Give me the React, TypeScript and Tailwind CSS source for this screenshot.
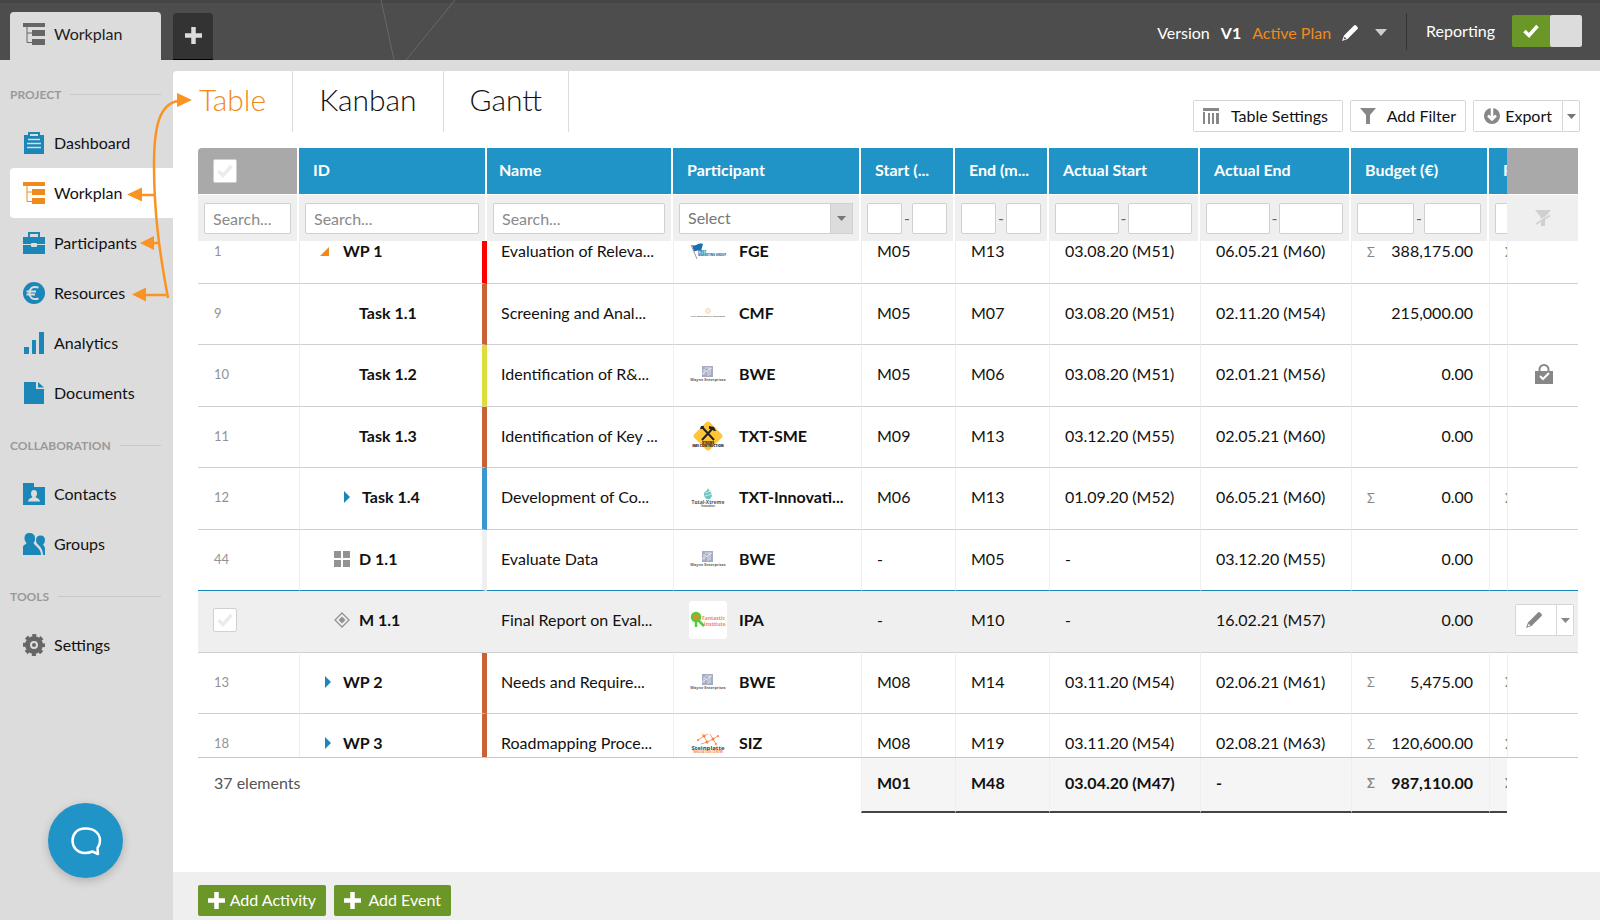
import { useState, type ReactNode } from 'react'

type Row = {
  nr: string
  id: string
  kind: 'open' | 'closed' | 'child' | 'closedChild' | 'deliverable' | 'milestone'
  bar: string
  name: string
  participant: string
  logo: string
  start: string
  end: string
  actualStart: string
  actualEnd: string
  budget: string
  sum?: boolean
  locked?: boolean
}

const rows: Row[] = [
  { nr: '1', id: 'WP 1', kind: 'open', bar: 'border-r-[#ff0000]', name: 'Evaluation of Releva...', participant: 'FGE', logo: 'fge', start: 'M05', end: 'M13', actualStart: '03.08.20 (M51)', actualEnd: '06.05.21 (M60)', budget: '388,175.00', sum: true },
  { nr: '9', id: 'Task 1.1', kind: 'child', bar: 'border-r-[#c96137]', name: 'Screening and Anal...', participant: 'CMF', logo: 'cmf', start: 'M05', end: 'M07', actualStart: '03.08.20 (M51)', actualEnd: '02.11.20 (M54)', budget: '215,000.00' },
  { nr: '10', id: 'Task 1.2', kind: 'child', bar: 'border-r-[#dddd3c]', name: 'Identification of R&...', participant: 'BWE', logo: 'bwe', start: 'M05', end: 'M06', actualStart: '03.08.20 (M51)', actualEnd: '02.01.21 (M56)', budget: '0.00', locked: true },
  { nr: '11', id: 'Task 1.3', kind: 'child', bar: 'border-r-[#c96137]', name: 'Identification of Key ...', participant: 'TXT-SME', logo: 'sme', start: 'M09', end: 'M13', actualStart: '03.12.20 (M55)', actualEnd: '02.05.21 (M60)', budget: '0.00' },
  { nr: '12', id: 'Task 1.4', kind: 'closedChild', bar: 'border-r-[#3b97cf]', name: 'Development of Co...', participant: 'TXT-Innovati...', logo: 'txi', start: 'M06', end: 'M13', actualStart: '01.09.20 (M52)', actualEnd: '06.05.21 (M60)', budget: '0.00', sum: true },
  { nr: '44', id: 'D 1.1', kind: 'deliverable', bar: 'border-r-[#efefef]', name: 'Evaluate Data', participant: 'BWE', logo: 'bwe', start: '-', end: 'M05', actualStart: '-', actualEnd: '03.12.20 (M55)', budget: '0.00' },
  { nr: '45', id: 'M 1.1', kind: 'milestone', bar: 'border-r-[#efefef]', name: 'Final Report on Eval...', participant: 'IPA', logo: 'ipa', start: '-', end: 'M10', actualStart: '-', actualEnd: '16.02.21 (M57)', budget: '0.00' },
  { nr: '13', id: 'WP 2', kind: 'closed', bar: 'border-r-[#c96137]', name: 'Needs and Require...', participant: 'BWE', logo: 'bwe', start: 'M08', end: 'M14', actualStart: '03.11.20 (M54)', actualEnd: '02.06.21 (M61)', budget: '5,475.00', sum: true },
  { nr: '18', id: 'WP 3', kind: 'closed', bar: 'border-r-[#c96137]', name: 'Roadmapping Proce...', participant: 'SIZ', logo: 'siz', start: 'M08', end: 'M19', actualStart: '03.11.20 (M54)', actualEnd: '02.08.21 (M63)', budget: '120,600.00', sum: true },
]

const navGroups = [
  { title: 'Project', items: ['Dashboard', 'Workplan', 'Participants', 'Resources', 'Analytics', 'Documents'] },
  { title: 'Collaboration', items: ['Contacts', 'Groups'] },
  { title: 'Tools', items: ['Settings'] },
]

function WorkplanIcon() {
  return (
    <svg className="size-[22px]" viewBox="0 0 22 22" fill="currentColor" aria-hidden="true">
      <path d="M0 0h22v4H0zM9 7h13v6H9zM9 16h13v6H9z" />
      <path d="M4 4v15.500h5M4 10h5" fill="none" stroke="currentColor" />
    </svg>
  )
}

function NavIcon({ name }: { name: string }) {
  if (name === 'Workplan') return <WorkplanIcon />
  return (
    <svg className="size-[22px]" viewBox="0 0 22 22" fill="currentColor" aria-hidden="true">
      {name === 'Dashboard' && (
        <>
          <path fillRule="evenodd" d="M5 3V0h12v3h4v19H1V3zM7 2v2h8V2z" />
          <path d="M5 7.500h12M4 11.500h14M4 15.500h14" stroke="#dcdcdc" strokeWidth="1.500" />
        </>
      )}
      {name === 'Participants' && (
        <>
          <path fillRule="evenodd" d="M5 5V0h12v5h5v17H0V5zM7 2v3h8V2z" />
          <path d="M0 12.500h8M14 12.500h8" stroke="#dcdcdc" />
          <rect x="8" y="11" width="6" height="4" rx="1" fill="#dcdcdc" />
        </>
      )}
      {name === 'Resources' && (
        <>
          <circle cx="11" cy="11" r="11" />
          <path d="M15.500 5.500C9 3.500 6.500 7 6.500 11s2.500 7.500 9 5.500M3.500 9.500H13M3.500 12.500H12" fill="none" stroke="#dcdcdc" strokeWidth="2" />
        </>
      )}
      {name === 'Analytics' && <path d="M1 15h5v7H1zM9 8h4v14H9zM16 0h5v22h-5z" />}
      {name === 'Documents' && <path d="M1 0h12v7h8v15H1zM15 0l6 5.500h-6z" />}
      {name === 'Contacts' && (
        <>
          <path d="M0 0h11v4h11v18H0z" />
          <path d="M11 7c-2 0-3 1.500-3 3.500 0 1.500.5 2.500 1.500 3.500-.5 1-4.500 1.500-4.500 4.500h12c0-3-4-3.500-4.500-4.500 1-1 1.500-2 1.500-3.500C14 8.500 13 7 11 7z" fill="#dcdcdc" />
        </>
      )}
      {name === 'Groups' && (
        <>
          <path d="M6 0C3 0 1.500 2 1.500 5c0 2 .5 3.500 2 5C3 11.500 0 12 0 14v8h18c0-7-6-8.500-7.500-12 1.500-1.500 1.500-3 1.500-5 0-3-2-5-6-5z" />
          <path d="M17.500 2.500c-3 0-4.500 2-4.500 4.500 0 1.500.5 3 1.500 4 2 2 5.500 5 5.500 11h2v-6c0-2-1-3-2-4.500 1-1 2-2.500 2-4.500 0-2.500-1.500-4.500-4.500-4.500z" />
        </>
      )}
      {name === 'Settings' && (
        <>
          <circle cx="11" cy="11" r="6.500" fill="none" stroke="currentColor" strokeWidth="5" />
          <circle cx="11" cy="11" r="9.500" fill="none" stroke="currentColor" strokeWidth="3" strokeDasharray="4 3.460" strokeDashoffset="2" />
          <circle cx="11" cy="11" r="2" />
        </>
      )}
    </svg>
  )
}

function Plus() {
  return (
    <svg className="size-[17px]" viewBox="0 0 17 17" aria-hidden="true">
      <path d="M8.500 0v17M0 8.500h17" stroke="currentColor" strokeWidth="4.500" />
    </svg>
  )
}

function Caret() {
  return (
    <svg className="h-[5px] w-[9px]" viewBox="0 0 9 5" fill="currentColor" aria-hidden="true">
      <path d="M0 0h9L4.500 5z" />
    </svg>
  )
}

function Check() {
  return (
    <svg className="size-4" viewBox="0 0 16 16" fill="none" stroke="currentColor" strokeWidth="3.500" aria-hidden="true">
      <path d="M1.500 8l4.500 4.500L14.500 3" />
    </svg>
  )
}

function Pencil() {
  return (
    <svg className="size-4" viewBox="0 0 16 16" fill="currentColor" aria-hidden="true">
      <path fillRule="evenodd" d="M12.500 0c1.500 0 3.500 2 3.500 3.500L5.500 14 0 16l2-5.500zM2.700 11.800l-1.100 2.600 2.800-1z" />
    </svg>
  )
}

function Tick({ label }: { label: string }) {
  return (
    <label className="relative flex size-6 items-center justify-center rounded-xs border border-[#d0d0d0] bg-white text-[#ebebeb]">
      <input type="checkbox" aria-label={label} className="absolute inset-0 appearance-none" />
      <Check />
    </label>
  )
}

// Participant logos, all on a 38px white tile
function Logo({ name }: { name: string }) {
  return (
    <svg className="size-[38px] shrink-0 rounded-sm bg-white" viewBox="0 0 38 38" fontFamily="Open Sans, sans-serif" aria-hidden="true">
      {name === 'fge' && (
        <>
          <path d="M2 13l6 14" stroke="#999" strokeWidth="1" />
          <path d="M3 13c4 2 6-3 11-1l-2 7c-3-2-5 1-7 0z" fill="#1c6fae" />
          <text x="9" y="21" fontSize="3" fontWeight="800" fill="#1c6fae">FIRST</text>
          <text x="9" y="24" fontSize="2.800" fontWeight="800" fill="#1c6fae">MARKETING GROUP</text>
        </>
      )}
      {name === 'cmf' && (
        <>
          <circle cx="19" cy="17" r="2.500" fill="#fbeedd" stroke="#f3dcc0" />
          <text x="19" y="23" fontSize="2.300" textAnchor="middle" fontWeight="600" fill="#555">Cray Manufacturer Foundation</text>
        </>
      )}
      {name === 'bwe' && (
        <>
          <rect x="13" y="11" width="11" height="11" fill="#a5abc0" />
          <path d="M15 20v-6l3 3 3-4v7M16 13h6M19 21v-4M13 19l10-6" stroke="#dfe2ea" fill="none" />
          <text x="19" y="26" fontSize="3.800" textAnchor="middle" fontWeight="700" fill="#5a6072">Wayne Enterprises</text>
        </>
      )}
      {name === 'sme' && (
        <>
          <rect x="8" y="8" width="22" height="22" rx="3" transform="rotate(45 19 19)" fill="#fdc537" />
          <path d="M13 10l12 13M24 11L13 23" stroke="#222" strokeWidth="2" />
          <path d="M12 9l3 0-1 3-3 0zM20 9l5 1 2 4-2 0-2-2-3 0z" fill="#222" />
          <text x="19" y="26.500" fontSize="3" textAnchor="middle" fontWeight="800" fill="#222">XTREME</text>
          <text x="19" y="29.500" fontSize="3.200" textAnchor="middle" fontWeight="800" fill="#222">SME CONTRUCTION</text>
        </>
      )}
      {name === 'txi' && (
        <>
          <path d="M15 16c0-3 3-2 4-6 1 3 3 3 4 8l-2 3c-3 1-6-1-6-5z" fill="#6cc5c1" />
          <path d="M16 15l6-2M16 18l7-2" stroke="#c5ebe7" />
          <text x="19" y="26" fontSize="5" textAnchor="middle" fontWeight="700" fill="#555">Total-Xtreme</text>
          <text x="19" y="29" fontSize="2.500" textAnchor="middle" fill="#555">Innovation</text>
        </>
      )}
      {name === 'ipa' && (
        <>
          <circle cx="7" cy="16" r="4" fill="#e08a3c" stroke="#55cc33" strokeWidth="2.500" />
          <path d="M7 20v6M9 19l6 6" stroke="#55cc33" strokeWidth="2.500" />
          <text x="13" y="19" fontSize="5" fontWeight="700" fill="#f08a60">Fantastic</text>
          <text x="15" y="24.500" fontSize="5" fontWeight="700" fill="#f08a60">Institute</text>
        </>
      )}
      {name === 'siz' && (
        <>
          <path d="M9 16l6-4 3 6 6-3 5-3M15 12l4-2M18 18l-6 2M24 15l3 5M13 10l2 2M24 15l-3-5" stroke="#fb9a70" fill="none" />
          <g fill="#f97d45">
            <circle cx="15" cy="12" r="1.500" />
            <circle cx="18" cy="18" r="1.500" />
            <circle cx="24" cy="15" r="1.500" />
            <circle cx="9" cy="16" r="1" />
            <circle cx="29" cy="12" r="1" />
            <circle cx="27" cy="20" r="1" />
          </g>
          <text x="19" y="26" fontSize="6" textAnchor="middle" fontWeight="700" fill="#444">Steinplatte</text>
          <text x="19" y="29" fontSize="2.800" textAnchor="middle" fill="#f97d45">INNOVATION CENTER</text>
        </>
      )}
    </svg>
  )
}

function RowIcon({ kind }: { kind: Row['kind'] }) {
  if (kind === 'open')
    return (
      <button className="ml-5 mr-[14px] text-[#ef8a1d]" aria-label="Collapse">
        <svg className="size-[9px]" viewBox="0 0 9 9" fill="currentColor"><path d="M9 0v9H0z" /></svg>
      </button>
    )
  if (kind === 'closed' || kind === 'closedChild')
    return (
      <button className={kind === 'closed' ? 'ml-[25px] mr-3 text-[#1b86b8]' : 'ml-11 mr-3 text-[#1b86b8]'} aria-label="Expand">
        <svg className="h-3 w-[6px]" viewBox="0 0 6 12" fill="currentColor"><path d="M0 0l6 6-6 6z" /></svg>
      </button>
    )
  if (kind === 'deliverable')
    return (
      <svg className="ml-[34px] mr-[9px] size-4" viewBox="0 0 16 16" fill="#939393" aria-hidden="true">
        <path d="M0 0h7v7H0zM9 0h7v7H9zM0 9h7v7H0zM9 9h7v7H9z" />
      </svg>
    )
  if (kind === 'milestone')
    return (
      <svg className="ml-[34px] mr-[9px] size-4" viewBox="0 0 16 16" fill="none" stroke="#939393" strokeWidth="1.300" aria-hidden="true">
        <path d="M8 1l7 7-7 7-7-7z" />
        <path d="M8 4.500l3.500 3.500L8 11.500 4.500 8z" fill="#939393" stroke="none" />
      </svg>
    )
  return <span className="w-[59px]" />
}

function Cols() {
  return (
    <colgroup>
      <col className="w-[101px]" />
      <col className="w-[188px]" />
      <col />
      <col className="w-[188px]" />
      <col className="w-[94px]" />
      <col className="w-[94px]" />
      <col className="w-[151px]" />
      <col className="w-[151px]" />
      <col className="w-[138px]" />
      <col className="w-[18px]" />
      <col className="w-[71px]" />
    </colgroup>
  )
}

const tableClass = 'w-full table-fixed border-separate border-spacing-0 text-left'
const inputClass = 'h-[31px] w-full min-w-0 rounded-xs border border-[#d0d0d0] bg-white px-2 placeholder:text-[#8a8a8a]'

function Range({ label }: { label: string }) {
  return (
    <div className="flex items-center justify-between gap-[2px] text-[#666]">
      <input className={inputClass} aria-label={`${label} from`} />
      -
      <input className={inputClass} aria-label={`${label} to`} />
    </div>
  )
}

function Sigma() {
  return <span className="text-[13px] text-[#878787]">Σ</span>
}

function Cell({ children, className = '' }: { children?: ReactNode; className?: string }) {
  return <td className={`overflow-hidden border-l border-l-[#efefef] whitespace-nowrap pl-[15px] ${className}`}>{children}</td>
}

export default function App() {
  const [active, setActive] = useState('Workplan')
  const [reporting, setReporting] = useState(true)
  const headings = ['ID', 'Name', 'Participant', 'Start (...', 'End (m...', 'Actual Start', 'Actual End', 'Budget (€)', 'P']
  const btn = 'flex h-8 items-center rounded-xs border border-[#d6d6d6] bg-white'
  const tab = 'h-[61px] border-r border-[#dcdcdc] px-[26px] pb-1'

  return (
    <div className="relative flex min-h-screen flex-col bg-[#dcdcdc] font-[Lato,sans-serif] text-base leading-5 text-[#111]">
      <header className="relative flex h-[60px] items-end border-t-3 border-t-[#454545] bg-[#4d4d4d] pr-[18px] pl-[10px] text-white">
        <svg className="absolute bottom-0 left-[380px] h-[60px] w-20" viewBox="0 0 80 60" stroke="#686868" fill="none" aria-hidden="true">
          <path d="M1 0l13 60M75 0L26 60" />
        </svg>
        <a href="#workplan" className="flex h-12 w-[151px] items-center gap-[9px] rounded-t bg-[#dcdcdc] pl-[13px] pb-1 text-[#222]">
          <span className="text-[#666]"><WorkplanIcon /></span>
          Workplan
        </a>
        <button className="ml-3 flex h-[47px] w-10 items-center justify-center rounded-t border-b border-black bg-[#333] pb-[2px] text-[#dcdcdc]" aria-label="New tab">
          <Plus />
        </button>
        <div className="ml-auto flex h-[57px] items-center">
          <button className="flex items-center pt-[2px]">
            <span>Version</span>
            <span className="ml-[11px] font-bold">V1</span>
            <span className="mx-[11px] text-[#ef8a1d]">Active Plan</span>
            <Pencil />
            <svg className="ml-[17px] h-[7px] w-3 text-[#ccc]" viewBox="0 0 12 7" fill="currentColor" aria-hidden="true"><path d="M0 0h12L6 7z" /></svg>
          </button>
          <span className="mx-[19px] h-[37px] w-px bg-[#333]" />
          <label className="flex items-center gap-[17px] pb-[2px]">
            Reporting
            <input type="checkbox" className="sr-only" checked={reporting} onChange={(e) => setReporting(e.target.checked)} />
            <span className="flex h-8 w-[70px] justify-end overflow-hidden rounded-xs bg-[#6b9628]">
              <span className="flex flex-1 items-center justify-center"><Check /></span>
              <span className="w-8 rounded-xs bg-[#dcdcdc]" />
            </span>
          </label>
        </div>
      </header>

      <div className="flex grow">
        <nav className="w-[173px] shrink-0 pt-[7px]">
          {navGroups.map((group) => (
            <div key={group.title}>
              <h2 className="flex h-[51px] items-center gap-[9px] pt-1 pr-3 pl-[10px] text-xs font-bold text-[#999] uppercase">
                {group.title}
                <span className="h-px grow bg-[#c8c8c8]" />
              </h2>
              {group.items.map((item) => (
                <a
                  key={item}
                  href={`#${item.toLowerCase()}`}
                  onClick={() => setActive(item)}
                  className={`ml-[10px] flex h-[50px] items-center gap-[9px] rounded-l pl-[13px] ${item === active ? 'bg-white' : ''}`}
                >
                  <span className={item === active ? 'text-[#ef8a1d]' : item === 'Settings' ? 'text-[#666]' : 'text-[#1b86b8]'}>
                    <NavIcon name={item} />
                  </span>
                  {item}
                </a>
              ))}
            </div>
          ))}
        </nav>

        <main className="mt-[11px] flex min-w-0 grow flex-col rounded-tl bg-white">
          <div className="flex h-[77px] items-start justify-between pr-5">
            <div className="flex text-[30px] leading-[55px] font-light">
              <button className={`${tab} text-[#ef8a1d]`}>Table</button>
              <button className={tab}>Kanban</button>
              <button className={tab}>Gantt</button>
            </div>
            <div className="mt-[29px] flex gap-[7px]">
              <button className={`${btn} w-[150px] gap-3 px-[9px]`}>
                <svg className="size-4" viewBox="0 0 16 16" fill="#878787" aria-hidden="true"><path d="M0 0h16v3H0zM0 4h2v12H0zM5 5h2v11H5zM9 5h2v11H9zM13 5h3v11h-3z" /></svg>
                Table Settings
              </button>
              <button className={`${btn} w-[116px] justify-between px-[9px]`}>
                <svg className="size-4" viewBox="0 0 16 16" fill="#878787" aria-hidden="true"><path d="M0 0h16l-6 7v9H6V7z" /></svg>
                Add Filter
              </button>
              <div className="flex">
                <button className={`${btn} w-[90px] justify-between rounded-r-none px-[10px]`}>
                  <svg className="size-4" viewBox="0 0 16 16" aria-hidden="true">
                    <circle cx="8" cy="8" r="8" fill="#878787" />
                    <path d="M8 0v9M4 7.500l4 4 4-4" fill="none" stroke="#fff" strokeWidth="2.500" />
                  </svg>
                  Export
                </button>
                <button className={`${btn} w-[17px] justify-center rounded-l-none border-l-0 text-[#777]`} aria-label="Export options"><Caret /></button>
              </div>
            </div>
          </div>

          <div className="pr-[22px] pl-[25px]">
            <table className={tableClass}>
              <Cols />
              <thead>
                <tr className="h-[47px] text-white">
                  <th className="rounded-tl-sm border-r-2 border-b border-white bg-[#a9a9a9] pl-[15px]"><Tick label="Select all" /></th>
                  {headings.map((h) => (
                    <th
                      key={h}
                      className={`overflow-hidden border-b border-white bg-[#2094c6] pb-[2px] font-bold whitespace-nowrap ${h === 'P' ? '' : 'border-r-2'} ${h === 'Name' ? 'pl-3' : 'pl-[14px]'}`}
                    >
                      {h}
                    </th>
                  ))}
                  <th className="border-b border-white bg-[#a9a9a9]" aria-label="Actions" />
                </tr>
                <tr className="h-[46px] [&>td]:border-white [&>td]:bg-[#efefef] [&>td]:px-[6px]">
                  <td className="border-r-2"><input className={inputClass} placeholder="Search..." aria-label="Search number" /></td>
                  <td className="border-r-2"><input className={inputClass} placeholder="Search..." aria-label="Search ID" /></td>
                  <td className="border-r-2"><input className={inputClass} placeholder="Search..." aria-label="Search name" /></td>
                  <td className="border-r-2">
                    <div className="relative">
                      <select className={`${inputClass} appearance-none text-[#777]`} aria-label="Participant">
                        <option>Select</option>
                      </select>
                      <span className="pointer-events-none absolute top-0 right-0 flex h-[31px] w-[23px] items-center justify-center border border-[#d0d0d0] bg-[#dcdcdc] text-[#777]"><Caret /></span>
                    </div>
                  </td>
                  {headings.slice(3, 8).map((h) => (
                    <td key={h} className="border-r-2"><Range label={h} /></td>
                  ))}
                  <td className="overflow-hidden"><input className="h-[31px] w-16 rounded-xs border border-[#d0d0d0] bg-white align-middle" aria-label="P from" /></td>
                  <td>
                    <button className="mx-auto block text-[#d0d0d0]" aria-label="Clear filters">
                      <svg className="size-4" viewBox="0 0 16 16" fill="currentColor"><path d="M0 0h16l-5 6-5 3L5 6zM6 12l4-3v7H6z" /><path d="M1 14L15 5.500" stroke="currentColor" strokeWidth="1.500" /></svg>
                    </button>
                  </td>
                </tr>
              </thead>
            </table>

            {/* scrolled viewport, first and last row are cut off */}
            <div className="h-[517px] overflow-hidden border-b border-[#c8c8c8]">
              <table className={`${tableClass} -mt-[19px]`}>
                <Cols />
                <tbody>
                  {rows.map((row) => {
                    const hovered = row.kind === 'milestone'
                    const line = row.kind === 'deliverable' ? '[&>td]:border-b-[#1b86b8]' : '[&>td]:border-b-[#cfcfcf]'
                    const fill = hovered ? 'bg-[#efefef]' : ''
                    return (
                      <tr key={row.nr} className={`h-[61px] odd:h-[62px] [&>td]:border-b [&>td]:pb-[3px] ${line} ${fill}`}>
                        <td className="pl-4 text-[13px] text-[#939393]">{hovered ? <div className="-ml-px"><Tick label={`Select ${row.id}`} /></div> : row.nr}</td>
                        <td className={`border-r-5 border-l border-l-[#efefef] ${row.bar}`}>
                          <div className="flex items-center font-bold">
                            <RowIcon kind={row.kind} />
                            {row.id}
                          </div>
                        </td>
                        <td className="overflow-hidden pl-[14px] whitespace-nowrap">{row.name}</td>
                        <Cell>
                          <div className="flex items-center gap-3 font-bold">
                            <Logo name={row.logo} />
                            {row.participant}
                          </div>
                        </Cell>
                        <Cell>{row.start}</Cell>
                        <Cell>{row.end}</Cell>
                        <Cell>{row.actualStart}</Cell>
                        <Cell>{row.actualEnd}</Cell>
                        <Cell>
                          <div className="flex items-center justify-between pr-4">
                            <span>{row.sum && <Sigma />}</span>
                            {row.budget}
                          </div>
                        </Cell>
                        <Cell>{row.sum && <Sigma />}</Cell>
                        <td className="border-l border-l-[#efefef] pl-[7px]">
                          {row.locked && (
                            <svg className="ml-5 h-5 w-[18px]" viewBox="0 0 18 20" fill="none" aria-label="Locked">
                              <path d="M0 7h18v13H0z" fill="#878787" />
                              <path d="M4.500 8V5.500a4.500 4.500 0 0 1 9 0V8" stroke="#878787" strokeWidth="2" />
                              <path d="M5 12l3 3 6-6" stroke="#fff" strokeWidth="2" />
                            </svg>
                          )}
                          {hovered && (
                            <div className="flex text-[#878787]">
                              <button className={`${btn} w-[42px] justify-center rounded-r-none pr-1`} aria-label="Edit"><Pencil /></button>
                              <button className={`${btn} w-[17px] justify-center rounded-l-none border-l-0`} aria-label="More"><Caret /></button>
                            </div>
                          )}
                        </td>
                      </tr>
                    )
                  })}
                </tbody>
              </table>
            </div>

            <table className={tableClass}>
              <Cols />
              <tfoot>
                <tr className="h-[55px] font-bold [&>td]:border-b-2 [&>td]:border-b-[#444] [&>td]:bg-[#f5f5f5] [&>td]:pb-1">
                  <th colSpan={4} className="pb-[6px] pl-4 font-normal text-[#555]">37 elements</th>
                  <Cell>M01</Cell>
                  <Cell>M48</Cell>
                  <Cell>03.04.20 (M47)</Cell>
                  <Cell>-</Cell>
                  <Cell>
                    <div className="flex items-center justify-between pr-4">
                      <Sigma />
                      987,110.00
                    </div>
                  </Cell>
                  <Cell><Sigma /></Cell>
                  <th />
                </tr>
              </tfoot>
            </table>
          </div>

          <footer className="mt-auto flex h-12 items-center gap-2 bg-[#efefef] pt-2 pl-[25px] text-white">
            <button className="flex h-[31px] w-32 items-center justify-between rounded-xs bg-[#6b9628] px-[10px]"><Plus />Add Activity</button>
            <button className="flex h-[31px] w-[117px] items-center justify-between rounded-xs bg-[#6b9628] px-[10px]"><Plus />Add Event</button>
          </footer>
        </main>
      </div>

      {/* guide arrows between the menu and the table view */}
      <svg className="pointer-events-none absolute top-20 left-[120px] h-[230px] w-20" viewBox="120 80 80 230" fill="none" stroke="#fb9323" strokeWidth="2.500" aria-hidden="true">
        <path d="M168 298C160 255 154 215 154 165C154 125 160 104 178 101M142 195h12M154 243h6M146 295h20" />
        <path d="M192 100l-15-7v14zM127 194.500l15-7v14zM140 243l14-7v14zM132 294.500l14-7v14z" fill="#fb9323" stroke="none" />
      </svg>

      <button className="fixed bottom-[42px] left-12 flex size-[75px] items-center justify-center rounded-full bg-[#2094c6] shadow-[0_3px_10px_rgba(0,0,0,0.2)]" aria-label="Open chat">
        <svg className="size-8" viewBox="0 0 32 32" fill="none" stroke="#fff" strokeWidth="2.500" strokeLinejoin="round" aria-hidden="true">
          <path d="M16 3.500h-1C7 3.500 2.500 9 2.500 15.500S7 28 15 28c3 0 5-.5 7.500-1.500l5.500 2.500-.5-6c1.500-2 2.500-4.500 2.500-7.500C30 9 25 3.500 16 3.500z" />
        </svg>
      </button>
    </div>
  )
}
